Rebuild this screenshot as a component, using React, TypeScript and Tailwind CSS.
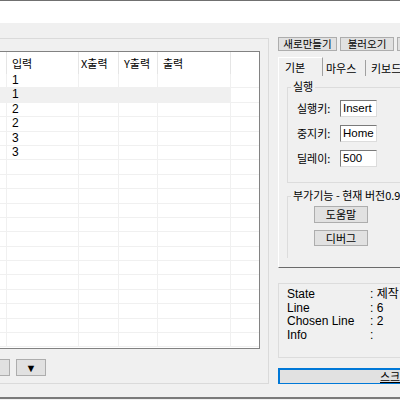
import React from 'react';

const ko = { fontFamily: '"Noto Sans CJK KR", "Noto Sans", sans-serif' };
const en = { fontFamily: '"Liberation Sans", "Noto Sans CJK KR", sans-serif' };

const data = ['1', '1', '2', '2', '3', '3'];

function Row({ value, selected }: { value?: string; selected?: boolean }) {
    const sel = selected ? 'bg-[#f0f0f0]' : '';
    return (
        <div className="flex h-[14.4px] border-b border-[#f0f0f0] text-[12px] leading-[13px] text-black" style={en}>
            <div className={`w-[7px] border-r border-[#f0f0f0] ${sel}`} />
            <div className={`w-[72px] border-r border-[#f0f0f0] pl-[5px] ${sel}`}>{value}</div>
            <div className={`w-[40px] border-r border-[#f0f0f0] ${sel}`} />
            <div className={`w-[39px] border-r border-[#f0f0f0] ${sel}`} />
            <div className={`w-[73px] border-r border-[#f0f0f0] ${sel}`} />
            <div className="flex-1" />
        </div>
    );
}

function Field({ label, value }: { label: string; value: string }) {
    return (
        <div className="flex items-center h-[17px]">
            <span className="w-[43px] text-[11px] leading-none" style={ko}>{label}</span>
            <div
                className="w-[37px] h-[17px] bg-white border border-[#7a7a7a] border-r-[#dcdcdc] border-b-[#dcdcdc] pl-[2px] text-[11.5px] leading-[15px]"
                style={en}
            >
                {value}
            </div>
        </div>
    );
}

const btn = 'bg-[#e1e1e1] border border-[#adadad] flex items-center justify-center text-[11px] leading-none text-black';

export default function App() {
    return (
        <div className="w-[400px] h-[400px] overflow-hidden bg-[#f0f0f0] flex flex-col text-black">
            <div className="h-px bg-[#707070]" />
            <div className="h-[22px] bg-white" />
            <div className="h-[14px]" />

            {/* Main area */}
            <div className="flex h-[347px]">
                {/* Left panel */}
                <div className="w-[269px] shrink-0 mt-px border-t border-r border-b border-[#dadada] flex flex-col">
                    <div className="pt-[12px]">
                        <div className="w-[260px] h-[298px] bg-white border-t border-r border-b border-[#828282] overflow-hidden">
                            <div className="flex h-[22px] items-center text-[11px]" style={ko}>
                                <div className="w-[7px] h-full border-r border-[#e5e5e5]" />
                                <div className="w-[72px] h-full border-r border-[#e5e5e5] pl-[5px] flex items-center">입력</div>
                                <div className="w-[40px] h-full border-r border-[#e5e5e5] pl-[2px] flex items-center">X출력</div>
                                <div className="w-[39px] h-full border-r border-[#e5e5e5] pl-[5px] flex items-center">Y출력</div>
                                <div className="w-[73px] h-full border-r border-[#e5e5e5] pl-[5px] flex items-center">출력</div>
                                <div className="flex-1" />
                            </div>
                            {Array.from({ length: 19 }).map((_, i) => (
                                <Row key={i} value={data[i]} selected={i === 1} />
                            ))}
                        </div>
                    </div>
                    <div className="flex mt-[10px]">
                        <div className="w-[10px] h-[17px] bg-[#e1e1e1] border-t border-r border-b border-[#adadad]" />
                        <div className={`${btn} w-[30px] h-[17px] ml-[6px] text-[10px]`}>▼</div>
                    </div>
                </div>

                {/* Right panel */}
                <div className="flex-1 min-w-0 overflow-hidden pl-[9px] flex flex-col">
                    <div className="flex h-[14px]">
                        <div className="bg-[#e1e1e1] border border-[#adadad] w-[59px] shrink-0 text-[10.5px] leading-[12px] text-center whitespace-nowrap" style={ko}>새로만들기</div>
                        <div className="bg-[#e1e1e1] border border-[#adadad] w-[54px] ml-[3px] shrink-0 text-[10.5px] leading-[12px] text-center whitespace-nowrap" style={ko}>불러오기</div>
                        <div className="bg-[#e1e1e1] border border-[#adadad] w-[60px] ml-[3px] shrink-0" />
                    </div>

                    {/* Tabs */}
                    <div className="flex mt-[6px] h-[19px] items-end text-[11px] leading-none" style={ko}>
                        <div className="w-[45px] h-[19px] border-l border-t border-r border-white border-r-[#a0a0a0] pl-[6px] pt-[4px] shrink-0 bg-[#f0f0f0]">기본</div>
                        <div className="w-[43px] h-[16px] border-r border-[#a0a0a0] pl-[3px] pt-[3px] shrink-0">마우스</div>
                        <div className="w-[60px] h-[16px] pl-[5px] pt-[3px] shrink-0 whitespace-nowrap">키보드</div>
                    </div>

                    <div className="h-[192px] shrink-0 border-l border-white border-b border-b-[#6a6a6a] pl-[8px] pt-[11px] flex flex-col">
                        {/* 실행 group */}
                        <div className="relative h-[96px] shrink-0 border-t border-l border-b border-[#dcdcdc] pl-[9px] pt-[12px] flex flex-col gap-[8px]">
                            <span className="absolute -top-[7px] left-[3px] px-[2px] bg-[#f0f0f0] text-[11px] leading-none" style={ko}>실행</span>
                            <Field label="실행키:" value="Insert" />
                            <Field label="중지키:" value="Home" />
                            <Field label="딜레이:" value="500" />
                        </div>

                        {/* 부가기능 group */}
                        <div className="relative mt-[13px] h-[62px] shrink-0 border-t border-l border-[#dcdcdc] pl-[26px] pt-[9px] flex flex-col gap-[7px]">
                            <span className="absolute -top-[7px] left-[3px] px-[2px] bg-[#f0f0f0] text-[11px] leading-none whitespace-nowrap" style={ko}>부가기능 - 현재 버전0.9</span>
                            <div className={`${btn} w-[54px] h-[17px]`} style={ko}>도움말</div>
                            <div className={`${btn} w-[54px] h-[16px]`} style={ko}>디버그</div>
                        </div>
                    </div>

                    {/* Info box */}
                    <div className="mt-[15px] h-[75px] shrink-0 border border-r-0 border-[#dcdcdc] pl-[8px] pt-[4px] text-[12px] leading-[13.5px]" style={en}>
                        {[
                            ['State', ': 제작'],
                            ['Line', ': 6'],
                            ['Chosen Line', ': 2'],
                            ['Info', ':'],
                        ].map(([k, v]) => (
                            <div key={k} className="flex whitespace-nowrap">
                                <span className="w-[83px] shrink-0">{k}</span>
                                <span>{v}</span>
                            </div>
                        ))}
                    </div>

                    <div className="mt-[10px] h-[17px] w-[220px] shrink-0 bg-[#e1e1e1] border-2 border-[#0078d7] flex items-center pl-[100px] text-[11px] leading-none" style={ko}>
                        <span className="underline whitespace-nowrap">스크립트 실행</span>
                    </div>
                </div>
            </div>

            <div className="h-[13px]" />
            <div className="h-[2px] bg-[#7a7a7a]" />
            <div className="flex-1 bg-[#f0f0f0]" />
        </div>
    );
}
